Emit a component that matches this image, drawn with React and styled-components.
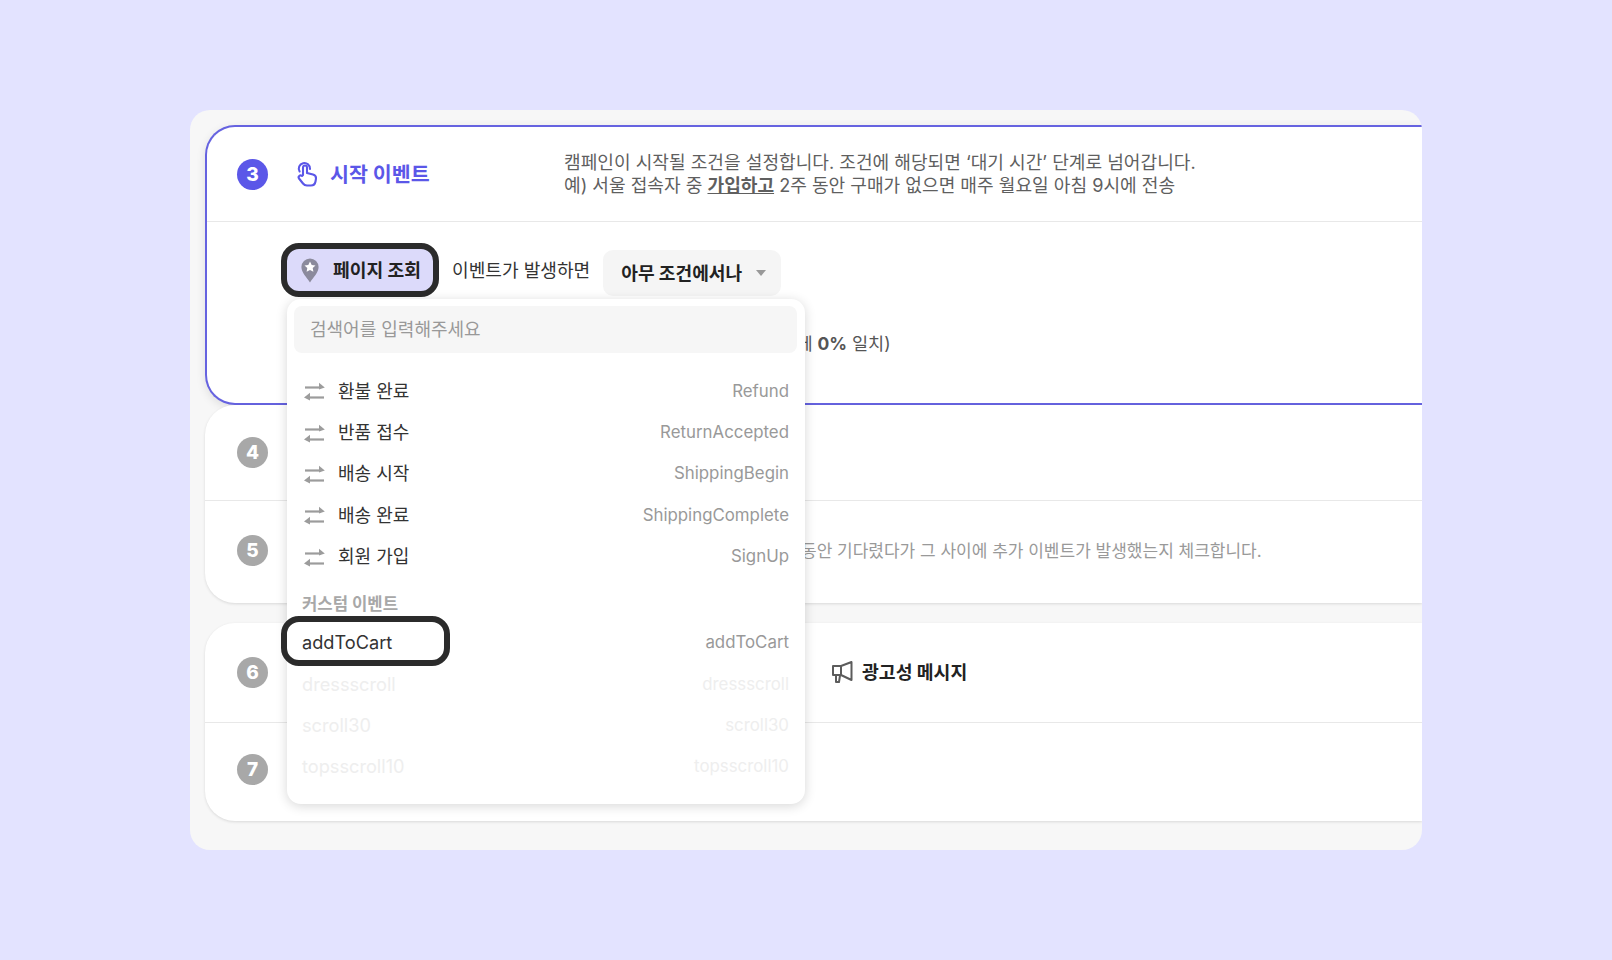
import React from 'react';
import styled, { createGlobalStyle } from 'styled-components';

const GlobalStyle = createGlobalStyle`
  html, body {
    margin: 0;
    padding: 0;
    background: #e3e3ff;
    font-family: Inter, "Noto Sans CJK KR", sans-serif;
  }
`;

const Page = styled.div`
  width: 1612px;
  height: 960px;
  padding: 110px 190px 0;
  box-sizing: border-box;
`;

const Panel = styled.div`
  position: relative;
  height: 740px;
  padding: 15px 0 0 15px;
  box-sizing: border-box;
  background: #f7f7f7;
  border-radius: 20px;
  overflow: hidden;
`;

const Card = styled.section`
  background: #fff;
  border-radius: 30px 0 0 30px;
  margin-bottom: ${({ $gap }) => $gap || 0}px;
  box-shadow: 0 1px 3px rgba(0, 0, 0, 0.12);
`;

const ActiveCard = styled(Card)`
  height: 280px;
  box-sizing: border-box;
  border: 2px solid #6663e0;
  border-right: none;
  box-shadow: 0 3px 10px rgba(0, 0, 0, 0.1);
`;

const Header = styled.div`
  display: flex;
  align-items: center;
  height: 94px;
  padding-left: 30px;
  border-bottom: 1px solid #e8e8e8;
`;

const StepRow = styled.div`
  display: flex;
  align-items: center;
  height: ${({ $h }) => $h}px;
  padding-left: 32px;
  padding-bottom: ${({ $pb }) => $pb || 0}px;
  border-bottom: ${({ $line }) => ($line ? '1px solid #e8e8e8' : 'none')};
`;

const Step = styled.div`
  flex: none;
  display: flex;
  align-items: center;
  justify-content: center;
  width: 31px;
  height: 31px;
  border-radius: 50%;
  background: ${({ $on }) => ($on ? '#5b57e8' : '#a8a8a8')};
  color: #fff;
  font-size: 19px;
  font-weight: 800;
`;

const TitleIcon = styled.svg`
  flex: none;
  margin-left: 28px;
`;

const Title = styled.h2`
  margin: 0 0 3px 12px;
  width: 234px;
  color: #5b57e8;
  font-size: 20.6px;
  font-weight: 700;
`;

const Desc = styled.p`
  margin: 0;
  color: #5f5f5f;
  font-size: 18.1px;
  line-height: 23.5px;
  white-space: nowrap;
  strong {
    font-weight: 700;
    text-decoration: underline;
  }
`;

const Body = styled.div`
  padding: 21px 0 0 74px;
`;

const ConditionRow = styled.div`
  display: flex;
  align-items: flex-start;
`;

const EventPill = styled.div`
  display: flex;
  align-items: center;
  width: 158px;
  height: 54px;
  box-sizing: border-box;
  border: 6px solid #2b2b2b;
  border-radius: 18px;
  padding: 0 0 2px 14px;
  background: #dcdafa;
  color: #222;
  font-size: 18.2px;
  font-weight: 700;
  white-space: nowrap;
  svg {
    flex: none;
    margin: 2px 14px 0 0;
  }
`;

const ConditionText = styled.span`
  margin: 15px 13px 0 13px;
  color: #333;
  font-size: 18.1px;
  line-height: 24px;
  white-space: nowrap;
`;

const Select = styled.div`
  display: flex;
  align-items: center;
  width: 178px;
  height: 46px;
  margin-top: 7px;
  padding: 0 0 2px 18px;
  box-sizing: border-box;
  border-radius: 10px;
  background: #f5f5f5;
  color: #222;
  font-size: 18.1px;
  font-weight: 700;
  white-space: nowrap;
`;

const Caret = styled.i`
  margin: 2px 0 0 14px;
  border-left: 5.5px solid transparent;
  border-right: 5.5px solid transparent;
  border-top: 6px solid #999;
`;

const MatchLine = styled.div`
  margin: 35px 0 0 430px;
  color: #555;
  font-size: 17.5px;
  line-height: 24px;
  white-space: nowrap;
  b {
    font-weight: 700;
  }
`;

const MutedDesc = styled.p`
  margin: 0 0 2px 533px;
  color: #999;
  font-size: 17px;
  white-space: nowrap;
`;

const MessageType = styled.div`
  display: flex;
  align-items: center;
  gap: 9px;
  margin: 0 0 4px 563px;
  color: #222;
  font-size: 18.3px;
  font-weight: 700;
  white-space: nowrap;
  svg {
    flex: none;
    margin-top: 2px;
  }
`;

const Dropdown = styled.div`
  position: absolute;
  left: 97px;
  top: 189px;
  width: 518px;
  height: 505px;
  box-sizing: border-box;
  padding: 7px 8px 0 7px;
  background: #fff;
  border-radius: 14px;
  box-shadow: 0 2px 12px rgba(0, 0, 0, 0.16);
`;

const Search = styled.div`
  display: flex;
  align-items: center;
  height: 47px;
  padding: 0 0 3px 16px;
  box-sizing: border-box;
  margin-bottom: 17px;
  border-radius: 8px;
  background: #f6f6f6;
  color: #999;
  font-size: 18px;
`;

const Item = styled.div`
  position: relative;
  display: flex;
  align-items: center;
  height: 41.4px;
  padding: 0 8px 0 8px;
  color: ${({ $faded }) => ($faded ? '#eeeeee' : '#333')};
  font-size: 18.2px;
  svg {
    flex: none;
    margin: 1px 13px 0 2px;
  }
`;

const ItemLabel = styled.span`
  margin-bottom: 2px;
  font-size: 18px;
`;

const ItemKey = styled.span`
  margin-left: auto;
  color: ${({ $faded }) => ($faded ? '#eeeeee' : '#999')};
  font-size: 16.85px;
`;

const GroupLabel = styled.div`
  height: 28.5px;
  margin-top: 16px;
  padding-left: 8px;
  color: #a8a8a8;
  font-size: 16.7px;
  font-weight: 700;
  line-height: 22px;
`;

const Focus = styled.span`
  position: absolute;
  left: -13px;
  top: -5px;
  width: 169px;
  height: 50px;
  box-sizing: border-box;
  border: 6px solid #2b2b2b;
  border-radius: 18px;
`;

const SwapIcon = () => (
  <svg width="21" height="22" viewBox="0 0 21 22" fill="none" stroke="#9c9c9c" strokeWidth="2.2">
    <path d="M1 7.5h16" />
    <path d="M15 2.8L20.8 7.5 15 9.5z" fill="#9c9c9c" stroke="none" />
    <path d="M20 17.5H4" />
    <path d="M6 12.8L0 17.5 6 20.5z" fill="#9c9c9c" stroke="none" />
  </svg>
);

const events = [
  ['환불 완료', 'Refund'],
  ['반품 접수', 'ReturnAccepted'],
  ['배송 시작', 'ShippingBegin'],
  ['배송 완료', 'ShippingComplete'],
  ['회원 가입', 'SignUp'],
];

const customEvents = ['dressscroll', 'scroll30', 'topsscroll10'];

export default function App() {
  return (
    <Page>
      <GlobalStyle />
      <Panel>
        <ActiveCard>
          <Header>
            <Step $on>3</Step>
            <TitleIcon width="22" height="26" viewBox="0 0 22 26" fill="none" stroke="#5b57e8" strokeWidth="2.1" strokeLinecap="round" strokeLinejoin="round">
              <path d="M3.6 10.5A5.6 5.6 0 1 1 14 8" />
              <path d="M7 14V6.5a2 2 0 0 1 4 0V12l6 1.5c2 .6 3.2 2 3 4l-.5 3c-.4 2.5-2.3 4-4.6 4H11c-1.7 0-3-.7-4-2l-4-5c-1.3-2 1-4 3-2.5z" />
            </TitleIcon>
            <Title>시작 이벤트</Title>
            <Desc>
              캠페인이 시작될 조건을 설정합니다. 조건에 해당되면 ‘대기 시간’ 단계로 넘어갑니다.
              <br />
              예) 서울 접속자 중 <strong>가입하고</strong> 2주 동안 구매가 없으면 매주 월요일 아침 9시에 전송
            </Desc>
          </Header>
          <Body>
            <ConditionRow>
              <EventPill>
                <svg width="18" height="25" viewBox="0 0 18 25">
                  <path d="M9 .5a8.6 8.6 0 0 1 8.6 8.6c0 5.3-5.4 10.6-8.6 15.4C5.8 19.7.4 14.4.4 9.1A8.6 8.6 0 0 1 9 .5z" fill="#8b8a9c" />
                  <path d="M9 3.5l1.7 3.4 3.8.5-2.8 2.6.7 3.8L9 12l-3.4 1.8.7-3.8-2.8-2.6 3.8-.5z" fill="#fff" />
                </svg>
                페이지 조회
              </EventPill>
              <ConditionText>이벤트가 발생하면</ConditionText>
              <Select>
                아무 조건에서나
                <Caret />
              </Select>
            </ConditionRow>
            <MatchLine>
              전체 사용자에 <b>0%</b> 일치)
            </MatchLine>
          </Body>
        </ActiveCard>
        <Card $gap={20}>
          <StepRow $h={95} $line>
            <Step>4</Step>
          </StepRow>
          <StepRow $h={99} $pb={3}>
            <Step>5</Step>
            <MutedDesc>동안 기다렸다가 그 사이에 추가 이벤트가 발생했는지 체크합니다.</MutedDesc>
          </StepRow>
        </Card>
        <Card>
          <StepRow $h={99} $line>
            <Step>6</Step>
            <MessageType>
              <svg width="22" height="23" viewBox="0 0 22 23" fill="none" stroke="#5c5c5c" strokeWidth="2" strokeLinejoin="round">
                <path d="M2 6H10L20.5 2V20L10 15H2z" />
                <path d="M10 6v9" />
                <path d="M5 15v7h3l1-6.5" />
              </svg>
              광고성 메시지
            </MessageType>
          </StepRow>
          <StepRow $h={93} $pb={5}>
            <Step>7</Step>
          </StepRow>
        </Card>
        <Dropdown>
          <Search>검색어를 입력해주세요</Search>
          {events.map(([name, key]) => (
            <Item key={key}>
              <SwapIcon />
              <ItemLabel>{name}</ItemLabel>
              <ItemKey>{key}</ItemKey>
            </Item>
          ))}
          <GroupLabel>커스텀 이벤트</GroupLabel>
          <Item>
            addToCart
            <ItemKey>addToCart</ItemKey>
            <Focus />
          </Item>
          {customEvents.map((name) => (
            <Item key={name} $faded>
              {name}
              <ItemKey $faded>{name}</ItemKey>
            </Item>
          ))}
        </Dropdown>
      </Panel>
    </Page>
  );
}
